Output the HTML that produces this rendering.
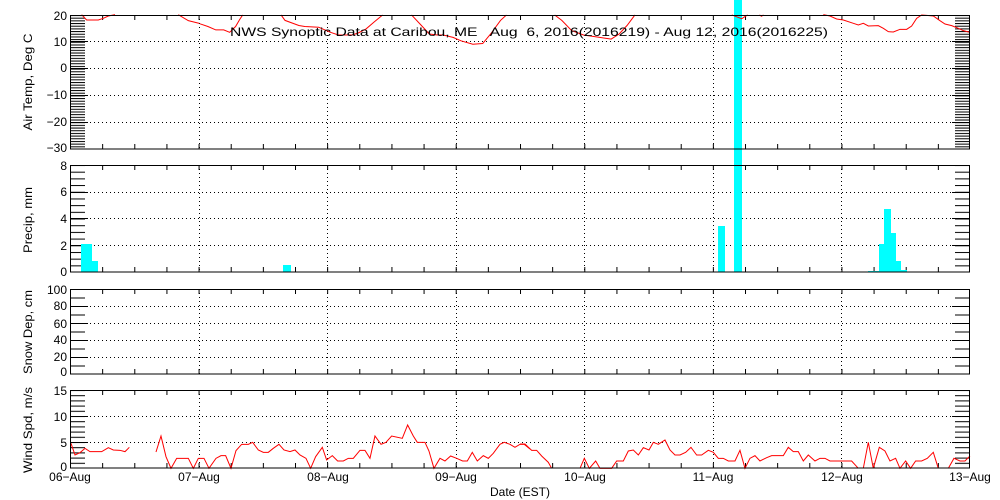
<!DOCTYPE html>
<html><head><meta charset="utf-8"><style>
html,body{margin:0;padding:0;background:#fff;}
svg{display:block;}
text{font-family:"Liberation Sans",sans-serif;font-size:12px;fill:#000;}
</style></head><body>
<svg width="1000" height="500" viewBox="0 0 1000 500" xmlns="http://www.w3.org/2000/svg">
<defs>
<pattern id="p1" x="0" y="15" width="20" height="2.68" patternUnits="userSpaceOnUse"><rect x="0" y="0" width="20" height="1" fill="#000"/></pattern>
<pattern id="p2" x="0" y="165" width="20" height="6.69" patternUnits="userSpaceOnUse"><rect x="0" y="0" width="20" height="1" fill="#000"/></pattern>
<pattern id="p3" x="0" y="289" width="20" height="8.5" patternUnits="userSpaceOnUse"><rect x="0" y="0" width="20" height="1" fill="#000"/></pattern>
<pattern id="p4" x="0" y="390" width="20" height="5.2" patternUnits="userSpaceOnUse"><rect x="0" y="0" width="20" height="1" fill="#000"/></pattern>
<pattern id="xt" x="70" y="0" width="32.143" height="10" patternUnits="userSpaceOnUse"><rect x="0" y="0" width="1" height="10" fill="#000"/></pattern>
</defs>
<rect x="70" y="15" width="15" height="134" fill="url(#p1)"/>
<rect x="955" y="15" width="15" height="134" fill="url(#p1)"/>
<rect x="70" y="165" width="15" height="107" fill="url(#p2)"/>
<rect x="955" y="165" width="15" height="107" fill="url(#p2)"/>
<rect x="70" y="289" width="15" height="85" fill="url(#p3)"/>
<rect x="955" y="289" width="15" height="85" fill="url(#p3)"/>
<rect x="70" y="390" width="15" height="78" fill="url(#p4)"/>
<rect x="955" y="390" width="15" height="78" fill="url(#p4)"/>
<rect x="70" y="15" width="900" height="5" fill="url(#xt)"/><rect x="70" y="144" width="900" height="5" fill="url(#xt)"/>
<rect x="70" y="165" width="900" height="5" fill="url(#xt)"/><rect x="70" y="267" width="900" height="5" fill="url(#xt)"/>
<rect x="70" y="289" width="900" height="5" fill="url(#xt)"/><rect x="70" y="369" width="900" height="5" fill="url(#xt)"/>
<rect x="70" y="390" width="900" height="5" fill="url(#xt)"/><rect x="70" y="463" width="900" height="5" fill="url(#xt)"/>
<g stroke="#000" stroke-width="1" stroke-dasharray="1,3" fill="none">
<path d="M70 41.5H970M70 68.5H970M70 95.5H970M70 122.5H970"/>
<path d="M70 245.5H970M70 218.5H970M70 192.5H970"/>
<path d="M70 306.5H970M70 323.5H970M70 340.5H970M70 357.5H970"/>
<path d="M70 416.5H970M70 442.5H970"/>
<path d="M199.5 15V149M327.5 15V149M456.5 15V149M584.5 15V149M713.5 15V149M841.5 15V149"/>
<path d="M199.5 165V272M327.5 165V272M456.5 165V272M584.5 165V272M713.5 165V272M841.5 165V272"/>
<path d="M199.5 289V374M327.5 289V374M456.5 289V374M584.5 289V374M713.5 289V374M841.5 289V374"/>
<path d="M199.5 390V468M327.5 390V468M456.5 390V468M584.5 390V468M713.5 390V468M841.5 390V468"/>
</g>
<g stroke="#000" stroke-width="1">
<path d="M70 41.5H88M70 68.5H88M70 95.5H88M70 122.5H88M952 41.5H970M952 68.5H970M952 95.5H970M952 122.5H970"/>
<path d="M70 245.5H88M70 218.5H88M70 192.5H88M952 245.5H970M952 218.5H970M952 192.5H970"/>
<path d="M70 306.5H88M70 323.5H88M70 340.5H88M70 357.5H88M952 306.5H970M952 323.5H970M952 340.5H970M952 357.5H970"/>
<path d="M70 416.5H88M70 442.5H88M952 416.5H970M952 442.5H970"/>
</g>
<g fill="#00ffff">
<rect x="81" y="244" width="11" height="28"/><rect x="92" y="261" width="6" height="11"/>
<rect x="283" y="265" width="8" height="7"/>
<rect x="718" y="226" width="7" height="46"/>
<rect x="734" y="0" width="8" height="272"/>
<rect x="868" y="271" width="11" height="1"/>
<rect x="879" y="244" width="5" height="28"/><rect x="884" y="209" width="7" height="63"/>
<rect x="891" y="233" width="5" height="39"/><rect x="896" y="261" width="5" height="11"/>
<rect x="901" y="270" width="6" height="2"/>
</g>
<g fill="none" stroke="#f00" stroke-width="1">
<polyline transform="scale(0.3333)" vector-effect="non-scaling-stroke" points="245,44 260,60 295,60 310,55 325,48 340,45 345,44"/>
<polyline transform="scale(0.3333)" vector-effect="non-scaling-stroke" points="535,44 565,62 598,70"/>
<g transform="translate(200,0) scale(0.3954,0.34)">
<polyline vector-effect="non-scaling-stroke" points="0,70 20,78 40,88 60,88 75,95 90,78 100,58 108,44"/>
<polyline vector-effect="non-scaling-stroke" points="205,44 215,60 250,75 265,78 300,80 330,95 350,103 385,103 400,97 420,85 440,65 462,44"/>
<polyline vector-effect="non-scaling-stroke" points="535,44 560,75 580,100 600,103 615,103 640,110 660,120 690,130 715,128 735,100 760,60 775,44"/>
<polyline vector-effect="non-scaling-stroke" points="897,44 915,60 940,90 970,103 1000,108 1040,115 1060,100 1080,75 1100,44"/>
<polyline vector-effect="non-scaling-stroke" points="1345,44 1370,55 1385,44"/>
<polyline vector-effect="non-scaling-stroke" points="1415,44 1420,48 1425,44"/>
</g>
<polyline transform="translate(800,0) scale(0.3333)" vector-effect="non-scaling-stroke" points="70,44 90,48 110,57 130,60 160,70 175,75 190,70 205,78 235,77 250,85 265,95 280,96 300,88 320,88 335,78 350,55 365,45 380,46 400,48 420,62 435,72 455,77 475,85 490,92 510,97"/>
</g>
<g fill="none" stroke="#f00" stroke-width="1">
<g transform="translate(60,380) scale(0.3333)">
<polyline vector-effect="non-scaling-stroke" points="33,190 45,225 60,218 75,205 90,215 125,215 145,203 160,210 180,211 195,215 208,202"/>
<polyline vector-effect="non-scaling-stroke" points="288,216 303,168 318,230 333,265 350,235 385,235 400,265 415,235 432,235 447,265 468,235 483,227 497,227 513,265 528,212 545,193 565,193 578,187 595,210 610,217 625,217 640,205 657,193 672,210 690,215 705,210 720,225 738,235 752,265 767,230 787,202 800,240 817,227 833,243 850,243 865,235 880,235 900,211 915,211 930,235 945,168 963,193 978,187 995,168 1027,175 1043,135 1060,168 1072,187 1095,187 1107,213 1122,265 1140,235 1155,243 1172,228 1190,235 1208,243 1222,243 1237,217 1252,243 1270,227 1285,235 1300,220 1320,193 1333,187 1350,193 1365,202 1380,193 1393,193 1410,207"/>
</g>
<g transform="translate(520,380) scale(0.3333)">
<polyline vector-effect="non-scaling-stroke" points="0,192 15,192 35,211 50,211 65,228 85,247 95,265"/>
<polyline vector-effect="non-scaling-stroke" points="180,265 193,235 208,265 227,243 240,265 275,265 290,243 310,243 325,213 340,210 355,225 370,203 387,210 400,187 415,193 435,180 450,210 465,225 480,225 497,217 513,202 530,225 545,225 565,211 580,217 595,235 610,235 625,243 645,243 660,211 675,265 690,235 705,227 720,243 740,233 755,227 790,227 805,202 820,215 835,215 850,243 865,225 885,243 900,235 915,235 930,243 995,243 1015,265"/>
<polyline vector-effect="non-scaling-stroke" points="1030,265 1045,187 1060,265 1078,202 1095,213 1110,243 1127,235 1140,265 1157,243 1172,265 1187,243 1205,243 1222,235 1240,217 1255,265"/>
<polyline vector-effect="non-scaling-stroke" points="1285,265 1302,235 1320,243 1335,243 1350,228"/>
</g>
</g>
<g fill="none" stroke="#000" stroke-width="1">
<rect x="70.5" y="15.5" width="899" height="133.5"/>
<rect x="70.5" y="165.5" width="899" height="106.5"/>
<rect x="70.5" y="289.5" width="899" height="84.5"/>
<rect x="70.5" y="390.5" width="899" height="77.5"/>
</g>
<text x="230" y="36" font-size="13" xml:space="preserve" style="white-space:pre" textLength="598" lengthAdjust="spacingAndGlyphs">NWS Synoptic Data at Caribou, ME   Aug  6, 2016(2016219) - Aug 12, 2016(2016225)</text>
<g text-anchor="end">
<text x="67" y="20">20</text><text x="67" y="46">10</text><text x="67" y="72">0</text><text x="67" y="99">−10</text><text x="67" y="126">−20</text><text x="67" y="152">−30</text>
<text x="67" y="170">8</text><text x="67" y="196">6</text><text x="67" y="223">4</text><text x="67" y="250">2</text><text x="67" y="276">0</text>
<text x="67" y="294">100</text><text x="67" y="310">80</text><text x="67" y="328">60</text><text x="67" y="344">40</text><text x="67" y="361">20</text><text x="67" y="376">0</text>
<text x="67" y="395">15</text><text x="67" y="421">10</text><text x="67" y="447">5</text><text x="67" y="471">0</text>
</g>
<g font-size="13">
<text transform="translate(32,82) rotate(-90)" text-anchor="middle" textLength="97" lengthAdjust="spacingAndGlyphs">Air Temp, Deg C</text>
<text transform="translate(32,220) rotate(-90)" text-anchor="middle" textLength="66" lengthAdjust="spacingAndGlyphs">Precip, mm</text>
<text transform="translate(32,332) rotate(-90)" text-anchor="middle" textLength="84" lengthAdjust="spacingAndGlyphs">Snow Dep, cm</text>
<text transform="translate(32,430) rotate(-90)" text-anchor="middle" textLength="86" lengthAdjust="spacingAndGlyphs">Wind Spd, m/s</text>
</g>
<g text-anchor="middle">
<text x="70" y="481">06−Aug</text><text x="199" y="481">07−Aug</text><text x="328" y="481">08−Aug</text><text x="456" y="481">09−Aug</text><text x="585" y="481">10−Aug</text><text x="713" y="481">11−Aug</text><text x="842" y="481">12−Aug</text><text x="970" y="481">13−Aug</text>
<text x="520" y="496">Date (EST)</text>
</g>
</svg>
</body></html>
